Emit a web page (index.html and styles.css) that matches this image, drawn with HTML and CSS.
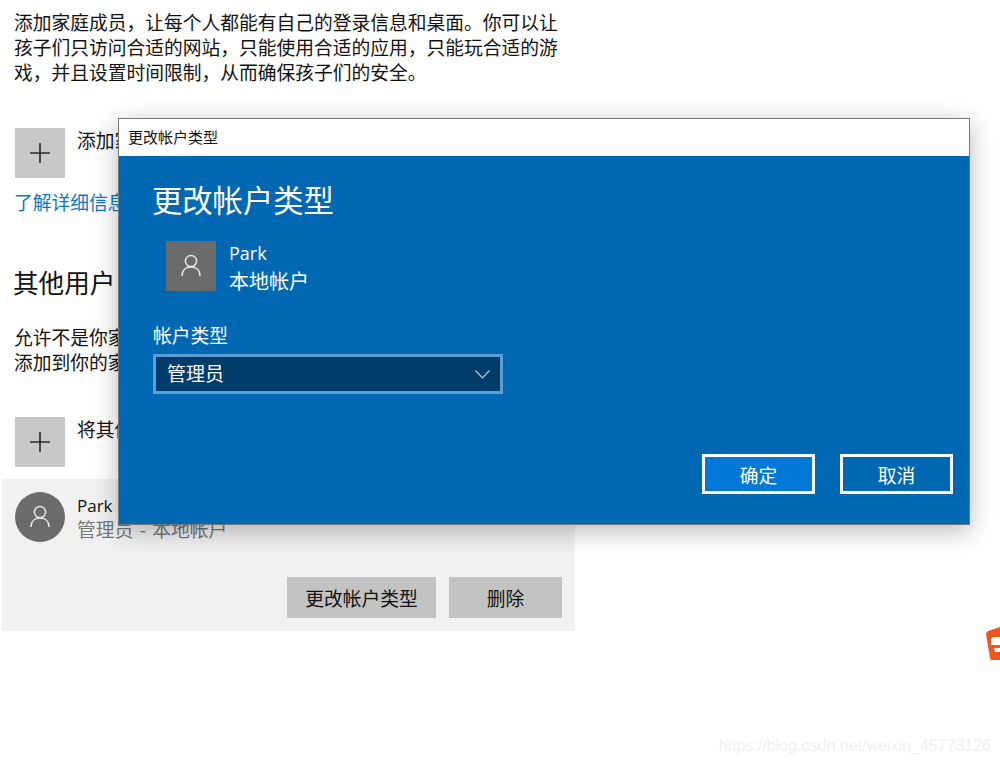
FILE: index.html
```html
<!DOCTYPE html>
<html lang="zh-CN">
<head>
<meta charset="utf-8">
<title>更改帐户类型</title>
<link rel="stylesheet" href="styles.css">
</head>
<body>
<main class="page">
  <p class="intro">添加家庭成员，让每个人都能有自己的登录信息和桌面。你可以让孩子们只访问合适的网站，只能使用合适的应用，只能玩合适的游戏，并且设置时间限制，从而确保孩子们的安全。</p>
  <div class="add-row add-first">
    <span class="add-tile"><svg width="22" height="22" viewBox="0 0 22 22"><path d="M11 1v20M1 11h20" stroke="#2b2b2b" stroke-width="1.6" fill="none"/></svg></span>
    <span class="add-label">添加家庭成员</span>
  </div>
  <a class="link">了解详细信息</a>
  <h2 class="section">其他用户</h2>
  <p class="section-text">允许不是你家庭一员的用户使用自己的帐户来登录。这不会将其<br>添加到你的家庭中。</p>
  <div class="add-row add-second">
    <span class="add-tile"><svg width="22" height="22" viewBox="0 0 22 22"><path d="M11 1v20M1 11h20" stroke="#2b2b2b" stroke-width="1.6" fill="none"/></svg></span>
    <span class="add-label">将其他人添加到这台电脑</span>
  </div>
  <section class="user-card">
    <div class="user-info">
      <span class="avatar"><svg width="20" height="24" viewBox="0 0 20 24"><circle cx="10" cy="7" r="5.6" stroke="#e6e6e6" stroke-width="1.5" fill="none"/><path d="M1 22c0-6 4-9 9-9s9 3 9 9" stroke="#e6e6e6" stroke-width="1.5" fill="none"/></svg></span>
      <div class="user-text">
        <div class="user-name">Park</div>
        <div class="user-sub">管理员 - 本地帐户</div>
      </div>
    </div>
    <div class="user-actions">
      <button class="grey-btn grey-wide">更改帐户类型</button>
      <button class="grey-btn grey-narrow">删除</button>
    </div>
  </section>
</main>

<div class="dialog">
  <div class="titlebar">更改帐户类型</div>
  <div class="dialog-body">
    <h1 class="dialog-title">更改帐户类型</h1>
    <div class="account">
      <span class="account-tile"><svg width="20" height="24" viewBox="0 0 20 24"><circle cx="10" cy="7" r="5.6" stroke="#e6e6e6" stroke-width="1.5" fill="none"/><path d="M1 22c0-6 4-9 9-9s9 3 9 9" stroke="#e6e6e6" stroke-width="1.5" fill="none"/></svg></span>
      <div class="account-text">
        <div class="account-name">Park</div>
        <div>本地帐户</div>
      </div>
    </div>
    <div class="field-label">帐户类型</div>
    <div class="select">
      <span>管理员</span>
      <svg width="15" height="9" viewBox="0 0 15 9"><path d="M.5.5 7.5 8 14.5.5" stroke="#b4cfe6" stroke-width="1.1" fill="none"/></svg>
    </div>
    <div class="dialog-actions">
      <button class="dlg-btn dlg-primary">确定</button>
      <button class="dlg-btn">取消</button>
    </div>
  </div>
</div>

<div class="badge"><svg width="14" height="33" viewBox="0 0 14 33"><path d="M2 4 14 0v10H8c-2 0-3 1-3 3v5h9v3H8l1 4h5v8H6c-1 0-2-1-2-2L0 7c0-1 1-2 2-3Z" fill="#f0561d"/></svg></div>
<div class="watermark">https://blog.csdn.net/weixin_45773126</div>
</body>
</html>
```
FILE: styles.css
```css
* { box-sizing: border-box; }
html, body { margin: 0; padding: 0; }
body {
  width: 1000px;
  height: 764px;
  overflow: hidden;
  background: #fff;
  color: #111;
  font-family: "Noto Sans CJK SC", "Liberation Sans", sans-serif;
  position: relative;
}
.page {
  width: 575px;
  padding: 9px 0 0 2px;
  display: flex;
  flex-direction: column;
}
.intro {
  margin: 0 0 0 12px;
  width: 548px;
  font-size: 18.76px;
  line-height: 25px;
}
.add-row { display: flex; align-items: flex-start; margin-left: 13px; gap: 12px; }
.add-first { margin-top: 44px; }
.add-second { margin-top: 43px; }
.add-tile {
  width: 50px;
  height: 50px;
  background: #c8c8c8;
  display: flex;
  align-items: center;
  justify-content: center;
}
.add-label { font-size: 18.76px; line-height: 26px; margin-top: -1px; }
.link {
  margin: 11px 0 0 12px;
  color: #0a78c4;
  font-size: 18.76px;
  line-height: 26px;
}
.section {
  margin: 49px 0 0 11px;
  font-size: 25.6px;
  font-weight: 400;
  line-height: 36px;
}
.section-text {
  margin: 24px 0 0 12px;
  width: 548px;
  font-size: 18.76px;
  line-height: 25px;
}
.user-card {
  margin-top: 12px;
  height: 152px;
  width: 573px;
  background: #f1f1f1;
  padding: 13px;
  display: flex;
  flex-direction: column;
  justify-content: space-between;
}
.user-info { display: flex; gap: 12px; }
.avatar {
  width: 50px;
  height: 50px;
  border-radius: 50%;
  background: #6b6b6b;
  display: flex;
  align-items: center;
  justify-content: center;
}
.user-text { font-size: 18.76px; line-height: 25px; margin-top: 1px; }
.user-name { color: #111; font-family: "Open Sans", "Noto Sans CJK SC", sans-serif; font-size: 17px; }
.user-sub { color: #777; word-spacing: 2px; margin-top: -2px; }
.user-actions { display: flex; justify-content: flex-end; gap: 13px; }
.grey-btn {
  height: 41px;
  border: 0;
  background: #c2c2c2;
  color: #111;
  font: inherit;
  font-size: 18.76px;
  padding: 0;
}
.grey-wide { width: 149px; }
.grey-narrow { width: 113px; }

.dialog {
  position: absolute;
  left: 118px;
  top: 118px;
  width: 852px;
  height: 407px;
  border: 1px solid #777;
  background: #0067b3;
  box-shadow: 0 6px 24px rgba(0, 0, 0, .28);
  display: flex;
  flex-direction: column;
}
.titlebar {
  height: 37px;
  flex: none;
  background: #fff;
  color: #111;
  font-size: 15px;
  line-height: 35px;
  padding-left: 9px;
}
.dialog-body {
  flex: 1;
  color: #fff;
  padding: 21px 16px 30px 34px;
  display: flex;
  flex-direction: column;
}
.dialog-title {
  margin: 0 0 0 -1px;
  font-size: 30.3px;
  font-weight: 400;
  line-height: 44px;
}
.account { display: flex; gap: 13px; margin: 20px 0 0 13px; }
.account-tile {
  width: 50px;
  height: 50px;
  background: #6b6b6b;
  display: flex;
  align-items: center;
  justify-content: center;
}
.account-text { font-size: 20px; line-height: 27px; margin-top: -1px; }
.account-name { font-family: "Open Sans", "Noto Sans CJK SC", sans-serif; font-size: 18px; }
.field-label {
  margin-top: 27px;
  font-size: 18.76px;
  line-height: 28px;
}
.select {
  margin-top: 5px;
  width: 350px;
  height: 40px;
  border: 3px solid #5c9fd6;
  background: #003c6b;
  padding: 0 10px 0 11px;
  display: flex;
  align-items: center;
  justify-content: space-between;
  font-size: 19px;
  line-height: 28px;
}
.select span { margin-top: -3px; }
.dialog-actions {
  margin-top: auto;
  display: flex;
  justify-content: flex-end;
  gap: 25px;
}
.dlg-btn {
  width: 113px;
  height: 40px;
  border: 3px solid #fff;
  background: #0067b3;
  color: #fff;
  font: inherit;
  font-size: 18.76px;
  padding: 0;
}
.dlg-primary { background: #0078d7; }

.badge { position: absolute; left: 986px; top: 627px; line-height: 0; }
.watermark {
  position: absolute;
  right: 9px;
  top: 735px;
  color: #f0f0f0;
  font-family: "Liberation Sans", sans-serif;
  font-size: 16px;
  line-height: 22px;
}
```
